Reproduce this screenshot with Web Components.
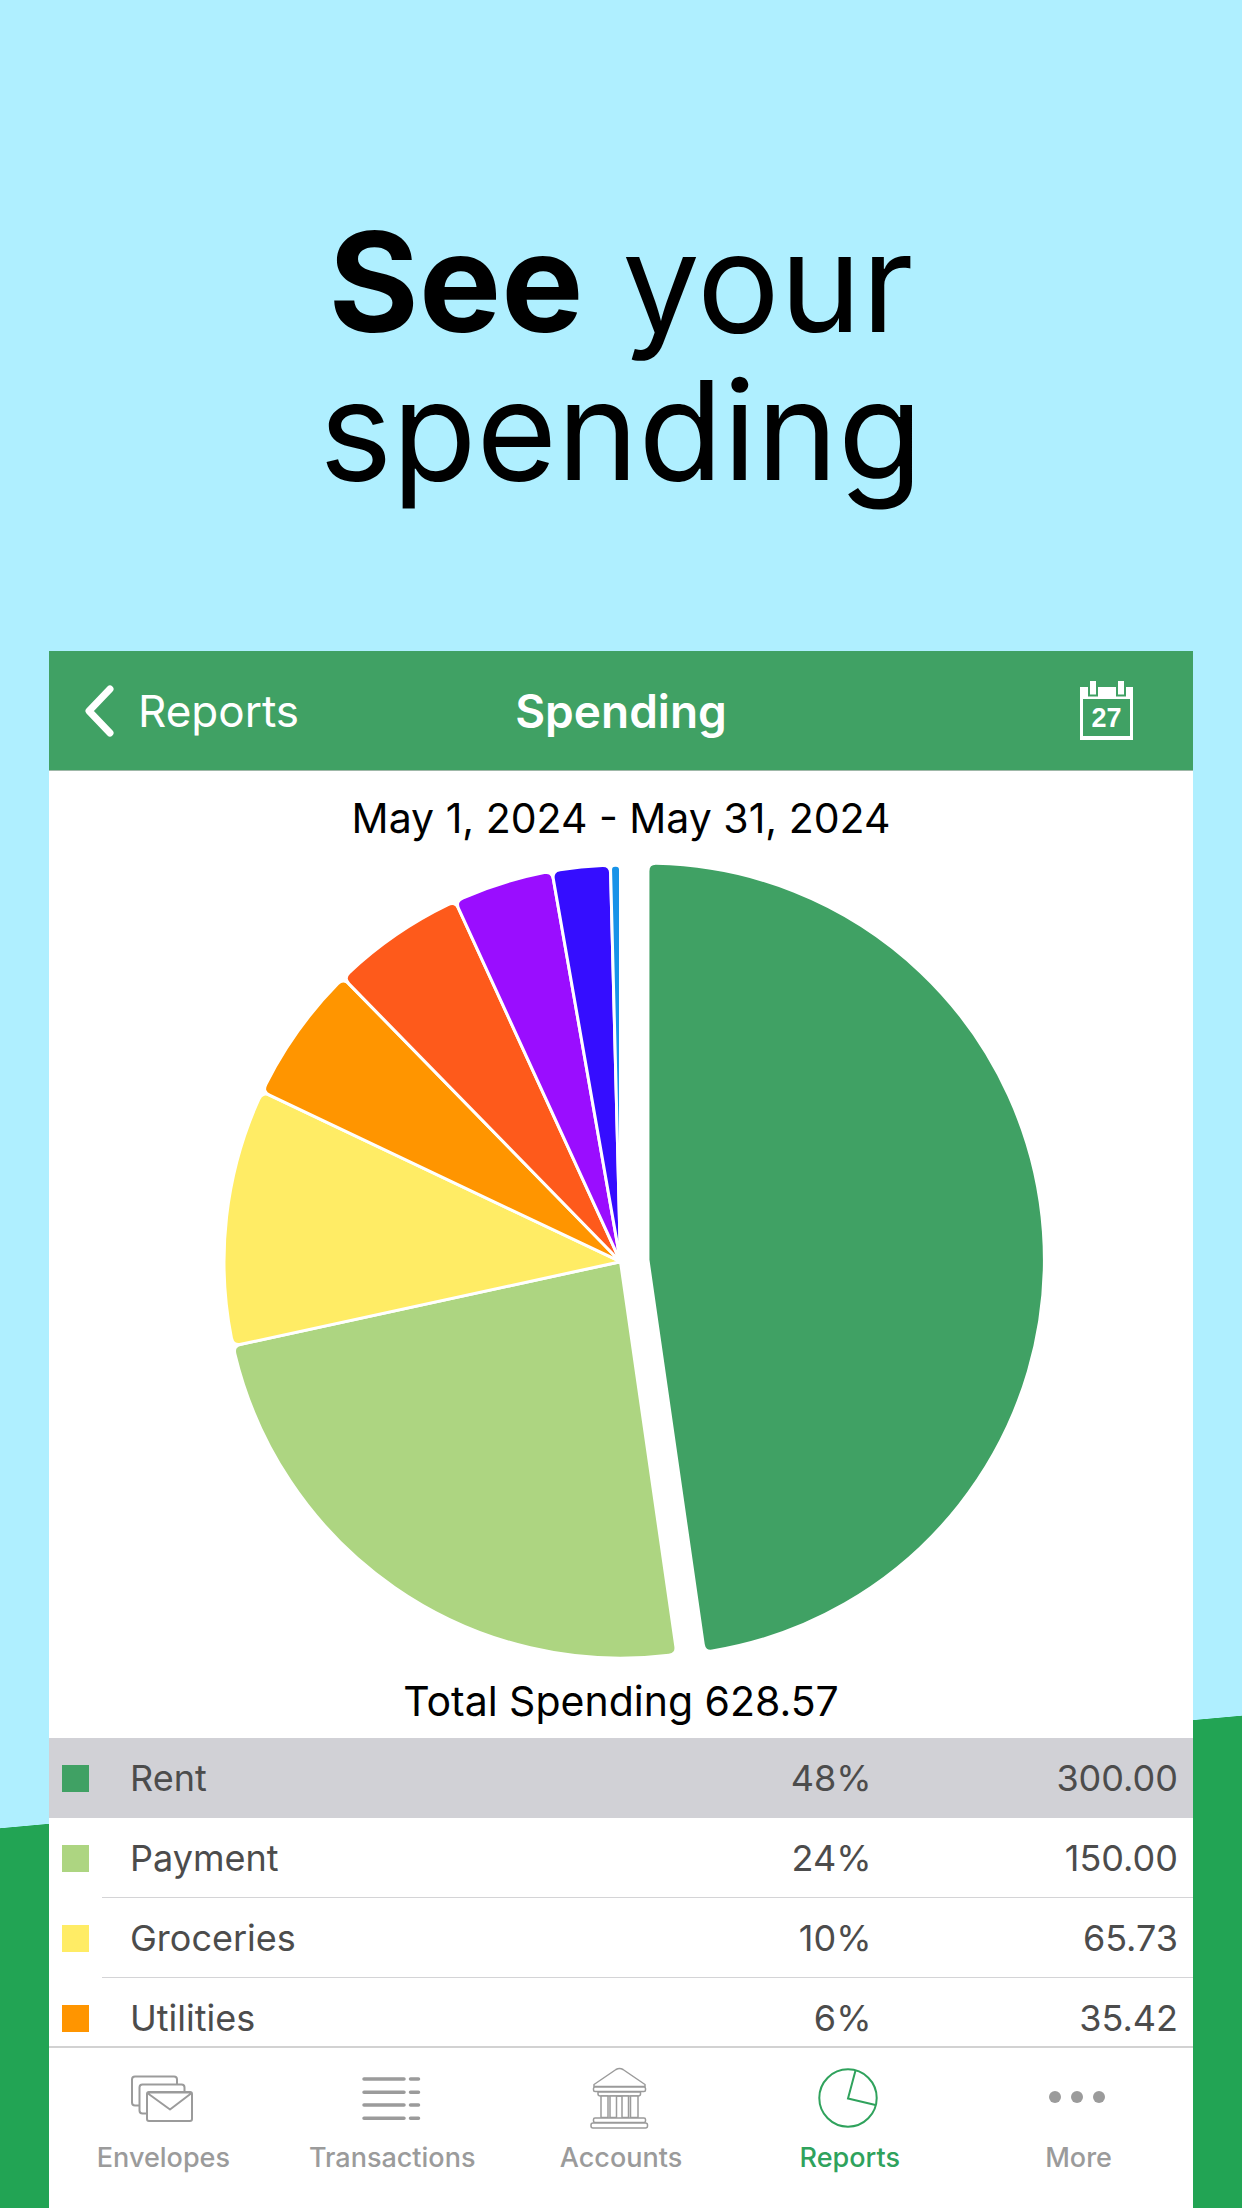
<!DOCTYPE html>
<html lang="en">
<head>
<meta charset="utf-8">
<title>Spending</title>
<style>
  body { margin: 0; font-family: Inter, "Liberation Sans", sans-serif; }
</style>
</head>
<body>
<promo-page>
  <promo-headline slot="headline"><b>See</b> your<br>spending</promo-headline>
  <app-frame>
    <nav-header slot="header" heading="Spending" back="Reports" day="27"></nav-header>
    <spending-chart slot="chart" total="628.57">May 1, 2024 - May 31, 2024</spending-chart>
    <spending-list slot="list"></spending-list>
    <tab-bar slot="tabs">
      <tab-item icon="envelopes">Envelopes</tab-item>
      <tab-item icon="transactions">Transactions</tab-item>
      <tab-item icon="accounts">Accounts</tab-item>
      <tab-item icon="reports" current>Reports</tab-item>
      <tab-item icon="more">More</tab-item>
    </tab-bar>
  </app-frame>
</promo-page>

<script>
const SPENDING = [
  { name: 'Rent', amount: 300, color: '#40a164', selected: true },
  { name: 'Payment', amount: 150, color: '#add581' },
  { name: 'Groceries', amount: 65.73, color: '#ffec65' },
  { name: 'Utilities', amount: 35.42, color: '#ff9500' },
  { name: 'Dining', amount: 34.42, color: '#fe5a1b' },
  { name: 'Fuel', amount: 25.62, color: '#9a0dff' },
  { name: 'Gifts', amount: 14.84, color: '#350dff' },
  { name: 'Fees', amount: 2.54, color: '#1793e8' }
];
const LISTED = 4;

class View extends HTMLElement {
  connectedCallback() {
    if (!this.shadowRoot) this.attachShadow({ mode: 'open' }).innerHTML = this.render();
  }
}

customElements.define('promo-page', class extends View {
  render() {
    return `<style>
      :host { display: flex; flex-direction: column; height: 100vh; overflow: hidden;
        background: linear-gradient(174.82deg, #afefff 78.77%, #22a454 78.8%); }
      main { flex: 1; min-height: 0; display: flex; padding: 0 49px; }
      ::slotted(app-frame) { flex: 1; }
    </style>
    <slot name="headline"></slot><main><slot></slot></main>`;
  }
});

customElements.define('promo-headline', class extends View {
  render() {
    return `<style>
      :host { display: block; padding: 208px 0 147px; text-align: center; color: #000; }
      h1 { margin: 0; font-size: 138px; line-height: 148px; font-weight: 400; }
    </style><h1><slot></slot></h1>`;
  }
});

customElements.define('app-frame', class extends View {
  render() {
    return `<style>
      :host { display: flex; flex-direction: column; min-width: 0; background: #fff; }
      .list { flex: 1; min-height: 0; overflow: hidden; }
    </style>
    <slot name="header"></slot><slot name="chart"></slot>
    <div class="list"><slot name="list"></slot></div>
    <slot name="tabs"></slot>`;
  }
});

customElements.define('nav-header', class extends View {
  render() {
    const a = n => this.getAttribute(n);
    return `<style>
      :host { display: block; background: #40a164; color: #fff; }
      header { display: grid; grid-template-columns: 1fr auto 1fr; align-items: center; height: 119px;
        padding: 0 33px; border-bottom: 1px solid #9fb8a8; }
      button { display: flex; align-items: center; gap: 22px; padding: 0; border: 0; background: none;
        color: inherit; font: inherit; font-size: 44px; line-height: 56px; }
      .back { justify-self: start; }
      .date { justify-self: end; padding-right: 27px; }
      h2 { margin: 0; font-size: 46px; line-height: 56px; font-weight: 600; }
      svg { display: block; }
    </style>
    <header>
      <button class="back" type="button">
        <svg width="34" height="56" viewBox="0 0 34 56" fill="none" stroke="#fff" stroke-width="7" stroke-linecap="round" stroke-linejoin="round"><path d="M28 6 7 28l21 22"/></svg>
        ${a('back')}</button>
      <h2>${a('heading')}</h2>
      <button class="date" type="button" aria-label="Choose dates">
        <svg width="53" height="60" viewBox="0 0 53 60">
          <path fill="#fff" fill-rule="evenodd" d="M0 6H53V59H0ZM3 18V55H50V18Z"/>
          <path fill="#fff" stroke="#40a164" stroke-width="2" d="M9 -1h8v15.500h-8ZM37 -1h8v15.500h-8Z"/>
          <text x="26.500" y="46" text-anchor="middle" fill="#fff" font-family="Liberation Sans, sans-serif" font-weight="700" font-size="27">${a('day')}</text>
        </svg></button>
    </header>`;
  }
});

customElements.define('spending-chart', class extends View {
  slices() {
    const cx = 439.5, cy = 419.7, R = 396.5, pull = 27.5;
    const sum = SPENDING.reduce((s, d) => s + d.amount, 0);
    let at = 0;
    return SPENDING.map(d => {
      const from = at, to = at += d.amount / sum * 2 * Math.PI, mid = (from + to) / 2;
      const ox = cx + (d.selected ? pull * Math.sin(mid) : 0);
      const oy = cy - (d.selected ? pull * Math.cos(mid) : 0);
      const p = (r, t) => `${(ox + r * Math.sin(t)).toFixed(2)} ${(oy - r * Math.cos(t)).toFixed(2)}`;
      const c = Math.min(8, (to - from) * R / 2.2), k = c / R;
      return `<path fill="${d.color}" d="M${p(0, 0)}L${p(R - c, from)}Q${p(R, from)} ${p(R, from + k)}A${R} ${R} 0 0 1 ${p(R, to - k)}Q${p(R, to)} ${p(R - c, to)}Z"/>`;
    }).join('');
  }
  render() {
    return `<style>
      :host { display: flex; flex-direction: column; align-items: center; padding: 23px 0 13px;
        font-size: 41px; line-height: 48px; color: #000; }
      p { margin: 0; }
      svg { display: block; width: 880px; max-width: 100%; }
    </style>
    <p><slot></slot></p>
    <svg viewBox="0 0 880 835" stroke="#fff" stroke-width="3" role="img" aria-label="Spending by envelope">${this.slices()}</svg>
    <p>Total Spending ${this.getAttribute('total')}</p>`;
  }
});

customElements.define('spending-list', class extends View {
  render() {
    const sum = SPENDING.reduce((s, d) => s + d.amount, 0);
    const rows = SPENDING.slice(0, LISTED).map(d => `<tr class="${d.selected ? 'selected' : ''}">
      <td class="key"><i style="background:${d.color}"></i></td>
      <th scope="row">${d.name}</th>
      <td class="share">${Math.round(d.amount / sum * 100)}%</td>
      <td class="amount">${d.amount.toFixed(2)}</td></tr>`).join('');
    return `<style>
      :host { display: block; color: #4c4c4c; }
      table { width: 100%; table-layout: fixed; border-spacing: 0; font-size: 36px; line-height: 44px; }
      th, td { box-sizing: border-box; height: 80px; padding: 1px 0 0; border-bottom: 1px solid #d4d4d6; font-weight: 400; }
      .key { width: 53px; padding-left: 13px; border-bottom-color: transparent; }
      i { display: block; width: 27px; height: 27px; }
      th { text-align: left; padding-left: 28px; }
      .share { width: 20%; text-align: right; }
      .amount { width: 28.1%; text-align: right; padding-right: 15px; }
      .selected > * { background: #d1d1d6; border-bottom-color: #d1d1d6; }
    </style>
    <table><tbody>${rows}</tbody></table>`;
  }
});

customElements.define('tab-bar', class extends View {
  render() {
    return `<style>
      :host { display: block; }
      nav { display: grid; grid-template-columns: repeat(5, 1fr); box-sizing: border-box; height: 162px;
        padding-top: 18px; border-top: 2px solid #d2d2d2; background: #fff; }
    </style><nav><slot></slot></nav>`;
  }
});

const ICONS = {
  envelopes: `<g fill="#fff" stroke="currentColor" stroke-width="2" stroke-linejoin="round">
    <rect x="2" y="10.500" width="45" height="29" rx="3"/><rect x="9.500" y="18.500" width="45" height="29" rx="3"/>
    <rect x="17" y="26" width="45" height="29" rx="2"/><path fill="none" d="M18 26.500H61M18 27.500 40 43.500 61 27.500"/></g>`,
  transactions: `<path stroke="currentColor" stroke-width="3.500" stroke-linecap="round" d="M5 13H45M51.500 13H59.500M5 26.300H45M51.500 26.300H59.500M5 39H45M51.500 39H59.500M5 52.300H45M51.500 52.300H59.500"/>`,
  accounts: `<g fill="#fff" stroke="currentColor" stroke-width="1.500" stroke-linejoin="round">
    <path d="M6 18.500 28 3.500Q31.500 1.500 35 3.500L57 18.500V20.500H6Z"/>
    <rect x="5.500" y="21" width="52" height="4.500" rx="1.500"/><path d="M10 26H52.500V28Q52.500 30 50 30H12.500Q10 30 10 28Z"/>
    <path d="M13 30H20V51.500H13ZM22 30H28.500V51.500H22ZM34 30H40.500V51.500H34ZM42.500 30H50V51.500H42.500ZM28.500 30H34"/>
    <rect x="5.500" y="52" width="52" height="4.500" rx="1.500"/><rect x="3" y="57" width="56.500" height="5" rx="2"/></g>`,
  reports: `<g fill="none" stroke="currentColor" stroke-width="2"><circle cx="31" cy="32" r="28.700"/><path d="M38.500 4.500 31 32.500 58.500 39"/></g>`,
  more: `<g fill="currentColor"><circle cx="9" cy="31" r="6"/><circle cx="31" cy="31" r="6"/><circle cx="53" cy="31" r="6"/></g>`
};

customElements.define('tab-item', class extends View {
  render() {
    return `<style>
      :host { display: block; color: #9b9b9b; }
      :host([current]) { color: #2fa25c; }
      a { display: flex; flex-direction: column; align-items: center; gap: 13px; color: inherit;
        text-decoration: none; font-size: 27px; line-height: 30px; font-weight: 500; }
      svg { display: block; }
    </style>
    <a href="#${this.getAttribute('icon')}"${this.hasAttribute('current') ? ' aria-current="page"' : ''}>
      <svg width="64" height="64" viewBox="1 0 64 64" aria-hidden="true">${ICONS[this.getAttribute('icon')]}</svg>
      <span><slot></slot></span></a>`;
  }
});
</script>
</body>
</html>
